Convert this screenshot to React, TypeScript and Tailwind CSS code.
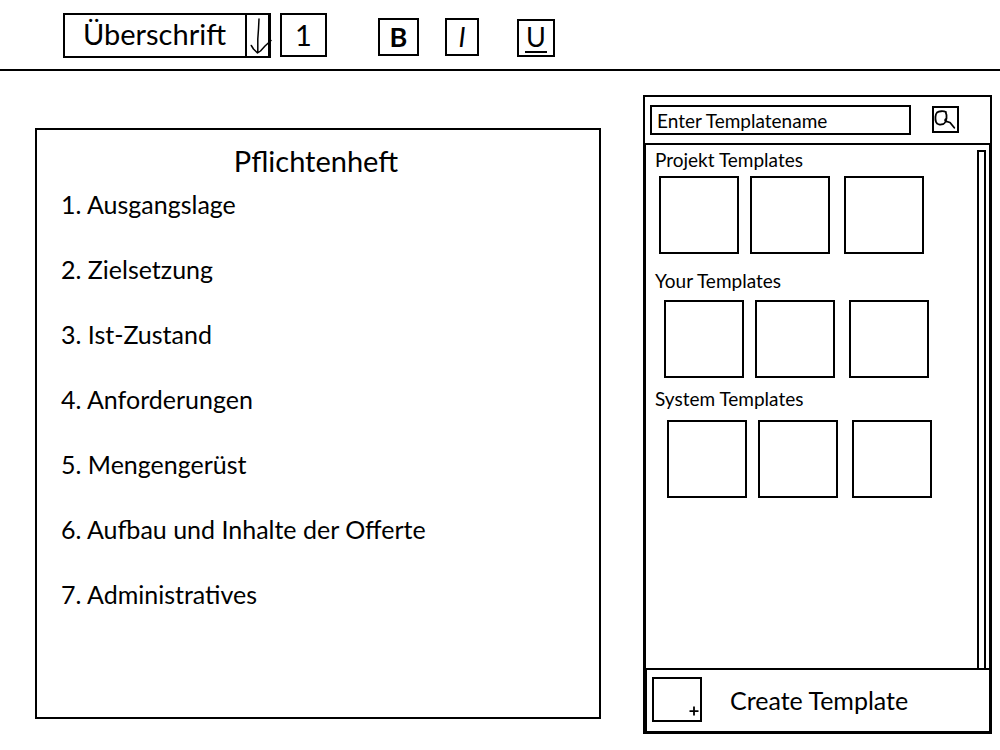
import React from "react";

type TemplateGroup = { title: string; heading: string; row: string };

const chapters = [
  "Ausgangslage",
  "Zielsetzung",
  "Ist-Zustand",
  "Anforderungen",
  "Mengengerüst",
  "Aufbau und Inhalte der Offerte",
  "Administratives",
];

const groups: TemplateGroup[] = [
  { title: "Projekt Templates", heading: "pt-[3px] pb-1", row: "pl-[13px]" },
  { title: "Your Templates", heading: "pt-[7px] pb-[7px]", row: "pl-[18px]" },
  { title: "System Templates", heading: "pt-px pb-[9px]", row: "pl-[21px]" },
];

function Toolbar() {
  return (
    <header className="flex items-start border-b-2 border-black pt-[13px] pb-[11px] pl-[63px]">
      <div className="relative">
        <select
          aria-label="Absatzformat"
          defaultValue="Überschrift"
          className="block h-[45px] w-[208px] appearance-none border-2 border-r-3 border-black bg-white pb-[3px] pl-[18px] text-[29px] leading-[38px]"
        >
          <option>Überschrift</option>
          <option>Text</option>
        </select>
        <svg
          className="pointer-events-none absolute top-0 right-0 h-[45px] w-[26px] overflow-visible"
          viewBox="0 0 26 45"
          fill="none"
          stroke="black"
          aria-hidden="true"
        >
          <path d="M1 2V43" strokeWidth="2" />
          <path
            d="M14 6L13.500 16L12.800 26V39M6.300 32.500L8.500 36L12.500 40L15.500 38L20 33L26 27.500"
            strokeWidth="1.500"
            strokeLinecap="round"
            strokeLinejoin="round"
          />
        </svg>
      </div>
      <input
        aria-label="Ebene"
        defaultValue="1"
        className="ml-[9px] h-11 w-[47px] border-2 border-black pb-0.5 text-center text-[29px] leading-[38px]"
      />
      <div className="flex pt-[5px] pl-[51px] text-[27px] leading-8">
        <button aria-label="Fett" className="h-[38px] w-[41px] border-2 border-black font-bold">
          B
        </button>
        <button aria-label="Kursiv" className="ml-[26px] h-[38px] w-[34px] border-2 border-black italic">
          I
        </button>
        <button
          aria-label="Unterstrichen"
          className="mt-px ml-[38px] flex h-[38px] w-[38px] justify-center border-2 border-black"
        >
          <span className="h-8 border-b-2 border-black px-px leading-8">U</span>
        </button>
      </div>
    </header>
  );
}

function Document() {
  return (
    <article className="mt-[33px] min-w-0 flex-1 border-2 border-black pt-[11px] pb-[78px] pl-6">
      <h1 className="pr-7 text-center text-[29px] leading-10">Pflichtenheft</h1>
      <ol className="pt-[3px] text-[25px]">
        {chapters.map((chapter, i) => (
          <li key={chapter} className="h-[65px] pt-1 leading-8">
            {i + 1}. {chapter}
          </li>
        ))}
      </ol>
    </article>
  );
}

function TemplatePanel() {
  return (
    <aside className="flex w-[349px] shrink-0 flex-col border-2 border-b-3 border-black">
      <form className="flex items-start border-b-2 border-black py-2 pl-[5px]" onSubmit={(e) => e.preventDefault()}>
        <input
          aria-label="Enter Templatename"
          placeholder="Enter Templatename"
          className="h-[30px] w-[261px] border-2 border-black pl-[5px] text-[19px] placeholder:text-black"
        />
        <button aria-label="Suchen" className="mt-px ml-[21px] h-[27px] w-[27px] border-2 border-black">
          <svg viewBox="0 0 23 23" className="h-[23px] w-[23px]" fill="none" stroke="black" aria-hidden="true">
            <path
              d="M12 4C9.500 2.800 5 3 3 4.500C1.200 6.500 1 11 2 14C3 16.800 6.500 17 9 16.200C11.500 15 12.300 12.500 12.500 10V7L11.500 3.800M12.500 10.500C11 11 10.800 12.500 11.500 13.200L16 14.500L20.300 19.800"
              strokeWidth="1.800"
              strokeLinecap="round"
              strokeLinejoin="round"
            />
          </svg>
        </button>
      </form>
      <div className="flex flex-1 border-x border-black">
        <div className="flex-1">
          {groups.map((group) => (
            <section key={group.title} className="pb-2">
              <h2 className={`${group.heading} pl-[9px] text-[19px] leading-6`}>{group.title}</h2>
              <div className={`${group.row} grid grid-cols-[91px_94px_80px]`}>
                {[1, 2, 3].map((n) => (
                  <button
                    key={n}
                    aria-label={`${group.title} ${n}`}
                    className="h-[78px] w-20 border-2 border-black"
                  />
                ))}
              </div>
            </section>
          ))}
        </div>
        <div className="mt-[5px] mr-[3px] w-[9px] border-2 border-b-0 border-black" />
      </div>
      <div className="border-r border-l-2 border-black">
        <div className="flex h-[63px] items-start border-t-2 border-black pt-[7px] pl-[5px]">
          <button
            aria-labelledby="create-template"
            className="flex h-[45px] w-[50px] items-end justify-end border-2 border-black pr-px pb-1"
          >
            <svg viewBox="0 0 10 10" className="h-2.5 w-2.5" stroke="black" strokeWidth="1.800" aria-hidden="true">
              <path d="M.5 5.200H9.500M5 .5V9.500" />
            </svg>
          </button>
          <span id="create-template" className="pt-px pl-7 text-[25px] leading-[45px]">
            Create Template
          </span>
        </div>
      </div>
    </aside>
  );
}

export default function App() {
  return (
    <div className="min-h-screen bg-white font-['Lato',sans-serif] text-black">
      <Toolbar />
      <main className="flex items-stretch gap-[42px] pt-6 pr-2 pb-4 pl-[35px]">
        <div className="flex min-w-0 flex-1 pb-[15px]">
          <Document />
        </div>
        <TemplatePanel />
      </main>
    </div>
  );
}
